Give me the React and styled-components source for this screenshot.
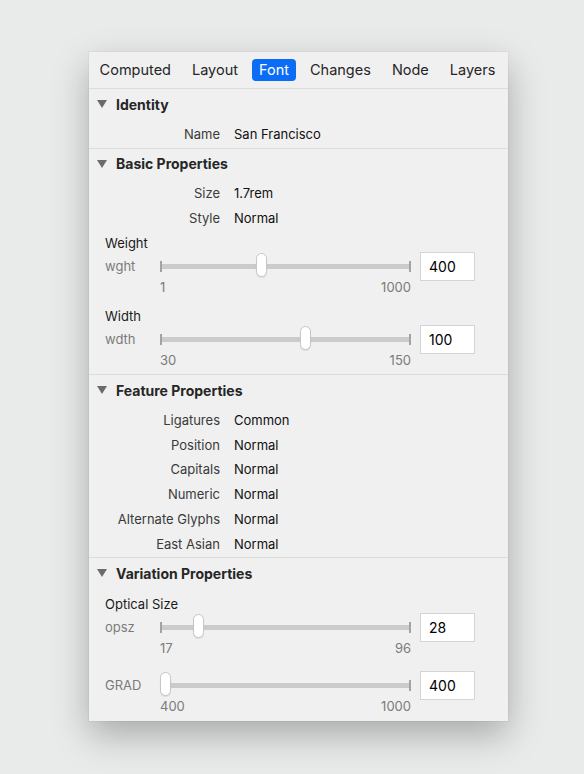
import React from 'react'
import styled, { createGlobalStyle } from 'styled-components'

const GlobalStyle = createGlobalStyle`
  body {
    margin: 0;
    background-color: #e9eaea;
    font-family: Inter, "Noto Sans", sans-serif;
    -webkit-font-smoothing: antialiased;
  }
`

const Page = styled.div`
  padding: 52px 0 54px 89px;
  min-height: 100vh;
  box-sizing: border-box;
`

const Panel = styled.div`
  width: 419px;
  background-color: #f0f0f0;
  box-shadow: 0 14px 34px rgba(0, 0, 0, 0.28), 0 0 0 1px rgba(0, 0, 0, 0.03);
`

const TabBar = styled.div`
  display: flex;
  justify-content: center;
  gap: 7px;
  height: 36px;
  align-items: center;
  border-bottom: 1px solid #dcdcdc;
  padding-right: 2px;
`

const Tab = styled.div`
  padding: 2px 7px;
  height: 18px;
  line-height: 18px;
  border-radius: 4px;
  font-size: 14.5px;
  color: ${props => props.active ? '#fff' : '#262626'};
  background-color: ${props => props.active ? '#0b6cf5' : 'transparent'};
`

const Section = styled.div`
  padding-bottom: ${props => props.pad || 0}px;
  border-bottom: ${props => props.last ? 'none' : '1px solid #dcdcdc'};
`

const Header = styled.div`
  display: flex;
  align-items: center;
  height: 30px;
  margin-bottom: ${props => props.gap || 0}px;
  padding-left: 8px;
  font-size: 14px;
  font-weight: 700;
  color: #262626;
`

const Triangle = styled.span`
  width: 0;
  height: 0;
  border-left: 5px solid transparent;
  border-right: 5px solid transparent;
  border-top: 8px solid #6b6b6b;
  margin-right: 9px;
`

const Row = styled.div`
  display: flex;
  align-items: center;
  height: 24.8px;
  font-size: 13px;
`

const Key = styled.div`
  width: 131px;
  text-align: right;
  color: #3a3a3a;
`

const Value = styled.div`
  margin-left: 14px;
  color: #111;
`

const SliderGroup = styled.div`
  padding: 0 16px;
  margin-top: ${props => props.top || 0}px;
`

const SliderTitle = styled.div`
  height: 22px;
  line-height: 22px;
  font-size: 13px;
  color: #1a1a1a;
`

const Control = styled.div`
  display: flex;
  align-items: center;
  height: 24px;
`

const Axis = styled.div`
  width: 55px;
  font-size: 13px;
  color: #7b7b7b;
`

const Track = styled.div`
  position: relative;
  width: 251px;
  height: 24px;
  display: flex;
  align-items: center;
`

const Rail = styled.div`
  flex: 1;
  height: 5px;
  background-color: #cbcbcb;
  position: relative;
  &::before, &::after {
    content: '';
    position: absolute;
    top: -3px;
    width: 2px;
    height: 11px;
    background-color: #a3a3a3;
  }
  &::before { left: 0; }
  &::after { right: 0; }
`

const Thumb = styled.div`
  position: absolute;
  top: -1px;
  width: 11px;
  height: 24px;
  margin-left: -5.5px;
  box-sizing: border-box;
  border-radius: 6px;
  background-color: #fff;
  border: 1px solid #c6c6c6;
  box-shadow: 0 1px 1px rgba(0, 0, 0, 0.08);
`

const NumberBox = styled.div`
  margin-left: 9px;
  width: 55px;
  height: 29px;
  flex-shrink: 0;
  box-sizing: border-box;
  background-color: #fff;
  border: 1px solid #d4d4d4;
  padding-left: 8px;
  line-height: 27px;
  font-size: 14px;
  color: #000;
`

const Scale = styled.div`
  display: flex;
  justify-content: space-between;
  margin-left: 55px;
  width: 251px;
  height: 18px;
  line-height: 18px;
  font-size: 13px;
  color: #7b7b7b;
`

const Slider = ({ title, axis, min, max, value, top }) => {
  const frac = (value - min) / (max - min)
  const left = 5.5 + frac * (251 - 11)
  return (
    <SliderGroup top={top}>
      {title && <SliderTitle>{title}</SliderTitle>}
      <Control>
        <Axis>{axis}</Axis>
        <Track>
          <Rail />
          <Thumb style={{ left: `${left}px` }} />
        </Track>
        <NumberBox>{value}</NumberBox>
      </Control>
      <Scale>
        <span>{min}</span>
        <span>{max}</span>
      </Scale>
    </SliderGroup>
  )
}

const tabs = ['Computed', 'Layout', 'Font', 'Changes', 'Node', 'Layers']

const features = [
  ['Ligatures', 'Common'],
  ['Position', 'Normal'],
  ['Capitals', 'Normal'],
  ['Numeric', 'Normal'],
  ['Alternate Glyphs', 'Normal'],
  ['East Asian', 'Normal']
]

const App = () => {
  return (
    <Page>
      <GlobalStyle />
      <Panel>
        <TabBar>
          {tabs.map(tab => (
            <Tab key={tab} active={tab === 'Font'}>{tab}</Tab>
          ))}
        </TabBar>

        <Section pad={1}>
          <Header gap={3}><Triangle />Identity</Header>
          <Row><Key>Name</Key><Value>San Francisco</Value></Row>
        </Section>

        <Section pad={5}>
          <Header gap={2}><Triangle />Basic Properties</Header>
          <Row><Key>Size</Key><Value>1.7rem</Value></Row>
          <Row><Key>Style</Key><Value>Normal</Value></Row>
          <Slider title='Weight' axis='wght' min={1} max={1000} value={400} top={2} />
          <Slider title='Width' axis='wdth' min={30} max={150} value={100} top={9} />
        </Section>

        <Section pad={1}>
          <Header gap={2}><Triangle />Feature Properties</Header>
          {features.map(([k, v]) => (
            <Row key={k}><Key>{k}</Key><Value>{v}</Value></Row>
          ))}
        </Section>

        <Section pad={6} last>
          <Header><Triangle />Variation Properties</Header>
          <Slider title='Optical Size' axis='opsz' min={17} max={96} value={28} top={5} />
          <Slider axis='GRAD' min={400} max={1000} value={400} top={16} />
        </Section>
      </Panel>
    </Page>
  )
}

export default App
